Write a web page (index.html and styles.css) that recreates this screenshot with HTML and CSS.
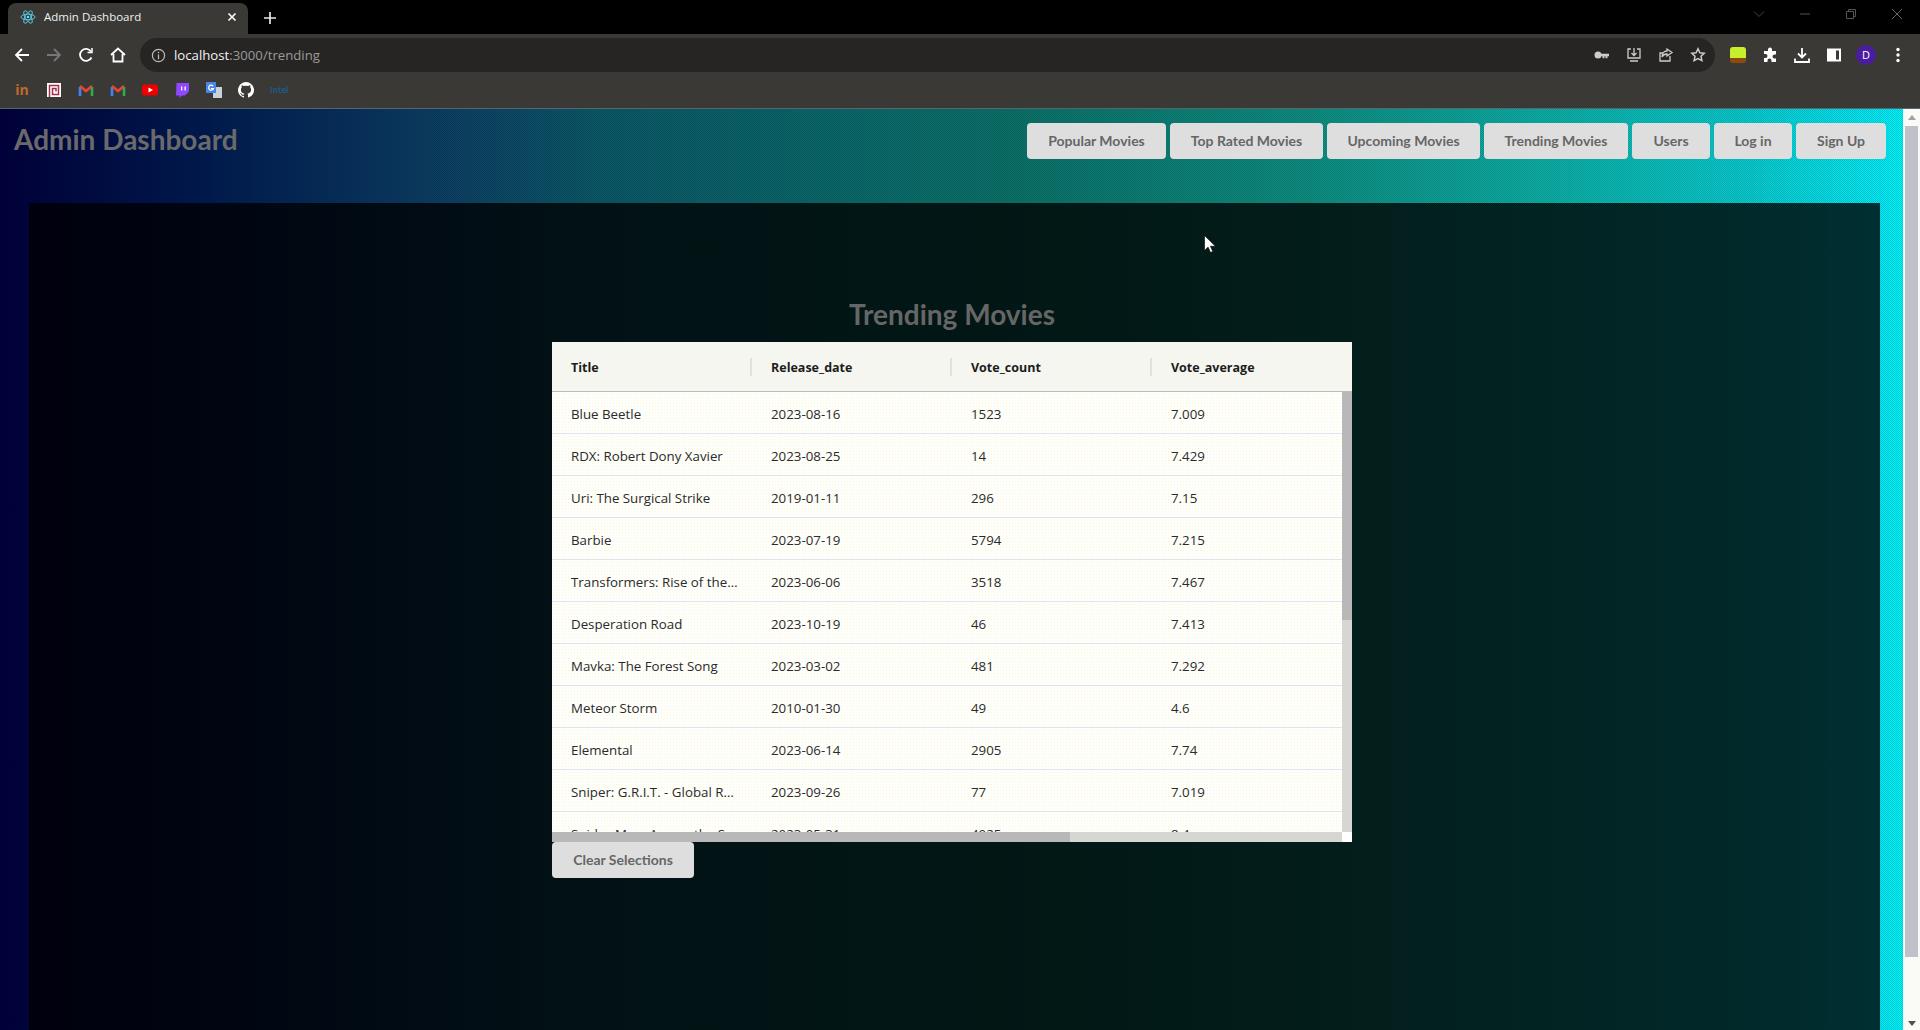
FILE: index.html
```html
<!DOCTYPE html>
<html lang="en">
<head>
  <meta charset="UTF-8" />
  <meta name="viewport" content="width=device-width, initial-scale=1.0" />
  <title>Admin Dashboard</title>
  <link rel="stylesheet" href="styles.css">
</head>
<body>
  <!-- browser chrome -->
  <div class="tabstrip">
    <div class="tab">
      <svg class="favicon" viewBox="0 0 16 16" fill="none" stroke="#61dafb" stroke-width=".8">
        <circle cx="8" cy="8" r="1.3" fill="#61dafb" stroke="none"/>
        <ellipse cx="8" cy="8" rx="7" ry="2.8"/>
        <ellipse cx="8" cy="8" rx="7" ry="2.8" transform="rotate(60 8 8)"/>
        <ellipse cx="8" cy="8" rx="7" ry="2.8" transform="rotate(120 8 8)"/>
      </svg>
      <span class="tab-title">Admin Dashboard</span>
      <svg class="tab-close" viewBox="0 0 10 10" stroke="#fff" stroke-width="1.6"><path d="M1.5 1.5l7 7M8.5 1.5l-7 7"/></svg>
    </div>
    <svg class="new-tab" viewBox="0 0 12 12" stroke="#e8e8e8" stroke-width="1.7"><path d="M6 0v12M0 6h12"/></svg>
    <div class="window-controls">
      <svg viewBox="0 0 12 12" fill="none" stroke="#444" stroke-width="1"><path d="M1 3.5l5 5 5-5"/></svg>
      <svg viewBox="0 0 12 12" fill="none" stroke="#555" stroke-width="1"><path d="M1 6h10"/></svg>
      <svg viewBox="0 0 12 12" fill="none" stroke="#555" stroke-width="1"><path d="M1.5 3.5h7v7h-7zM3.5 3.5v-2h7v7h-2"/></svg>
      <svg viewBox="0 0 12 12" fill="none" stroke="#666" stroke-width="1"><path d="M1 1l10 10M11 1L1 11"/></svg>
    </div>
  </div>

  <div class="toolbar">
    <div class="nav-icons">
      <svg viewBox="0 0 16 16" fill="none" stroke="#fff" stroke-width="1.8"><path d="M15 8H2M8 2L2 8l6 6"/></svg>
      <svg viewBox="0 0 16 16" fill="none" stroke="#777" stroke-width="1.8"><path d="M1 8h13M8 2l6 6-6 6"/></svg>
      <svg viewBox="0 0 16 16" fill="none" stroke="#fff" stroke-width="1.8"><path d="M13.5 10.5A6 6 0 1 1 13 4.5"/><path d="M14 1v4.5H9.5" stroke-width="1.5"/></svg>
      <svg viewBox="0 0 16 16" fill="none" stroke="#fff" stroke-width="1.8"><path d="M1 8l7-6.5L15 8M3.5 7v7.5h9V7"/></svg>
    </div>
    <div class="urlbar">
      <svg class="url-info" viewBox="0 0 16 16" fill="none" stroke="#bbb" stroke-width="1.3"><circle cx="8" cy="8" r="6.5"/><path d="M8 7v5M8 4v1.6"/></svg>
      <span class="url-text"><span class="url-host">localhost</span>:3000/trending</span>
      <div class="url-actions">
        <svg viewBox="0 0 16 16" fill="#ccc"><circle cx="4" cy="8" r="3.5"/><path d="M6 6.800h9v2.400h-1.500v2h-2v-2h-1v2h-2v-2H6z"/></svg>
        <svg viewBox="0 0 16 16" fill="none" stroke="#ccc" stroke-width="1.3"><path d="M5 2H2v9h12V2h-3M8 1v7M5.500 6L8 8.500 10.500 6M4 14h8"/></svg>
        <svg viewBox="0 0 16 16" fill="none" stroke="#ccc" stroke-width="1.3"><path d="M12 9v5H2V6h3M9 2l5 3.500L9 9V7C6.500 7 5 8 4 10c0-3.500 2-6 5-6z"/></svg>
        <svg viewBox="0 0 16 16" fill="none" stroke="#ccc" stroke-width="1.5"><path d="M8 1.800l1.900 4 4.300.5-3.200 3 .9 4.300L8 11.500l-3.900 2.100.9-4.300-3.200-3 4.300-.5z"/></svg>
      </div>
    </div>
    <div class="ext-icons">
      <span class="ext-note"></span>
      <svg viewBox="0 0 16 16" fill="#fff"><path d="M6 2.500a2 2 0 0 1 4 0V4h4v3.500h-1.500a2 2 0 0 0 0 4H14V15H9.500v-1.500a2 2 0 0 0-4 0V15H2v-4h1.500a2 2 0 0 0 0-4H2V4h4z"/></svg>
      <svg viewBox="0 0 16 16" fill="none" stroke="#fff" stroke-width="1.8"><path d="M8 1v9M4 6.500l4 4 4-4M1 11.500V15h14v-3.500"/></svg>
      <svg viewBox="0 0 16 16"><path fill="#fff" d="M1 1.500h14v13H1z"/><path fill="#3a3936" d="M10 3.500h3v9h-3z"/></svg>
      <span class="avatar">D</span>
      <svg viewBox="0 0 16 16" fill="#fff"><circle cx="8" cy="2.500" r="1.700"/><circle cx="8" cy="8" r="1.700"/><circle cx="8" cy="13.500" r="1.700"/></svg>
    </div>
  </div>

  <div class="bookmarks">
    <span class="bm-invision">in</span>
    <svg viewBox="0 0 16 16"><path fill="#fff" d="M1 1h14v14H1z"/><path fill="none" stroke="#a0304a" stroke-width="1.500" d="M3.500 15V3.500h9v9H6.500v-6h3.500v3"/></svg>
    <svg viewBox="0 0 16 16" fill="none" stroke-width="2.600"><path stroke="#4285f4" d="M2 14V5"/><path stroke="#ea4335" d="M2 4l6 5 6-5"/><path stroke="#34a853" d="M14 5v9"/></svg>
    <svg viewBox="0 0 16 16" fill="none" stroke-width="2.600"><path stroke="#4285f4" d="M2 14V5"/><path stroke="#ea4335" d="M2 4l6 5 6-5"/><path stroke="#34a853" d="M14 5v9"/></svg>
    <svg viewBox="0 0 16 16"><rect y="2.500" width="16" height="11" rx="2.500" fill="#e00"/><path fill="#fff" d="M6.500 5.500L11 8l-4.500 2.500z"/></svg>
    <svg viewBox="0 0 16 16"><path fill="#9146ff" d="M2.500 1H15v8.500L11 13.500H8L5.500 16v-2.500H2z"/><path fill="#fff" d="M7 4.500h1.300v4H7zM10.500 4.500h1.300v4h-1.300z"/></svg>
    <svg viewBox="0 0 16 16"><path fill="#c8d4dc" d="M7 5h9v11H7z"/><path fill="#4a86e8" d="M0 0h10v11H0z"/><path fill="none" stroke="#fff" stroke-width="1.200" d="M7 4a2.500 2.500 0 1 0 .5 2.500H5"/></svg>
    <svg viewBox="0 0 16 16"><path fill="#fff" fill-rule="evenodd" d="M8 0a8 8 0 0 0-2.500 15.600c.4 0 .5-.2.500-.4v-1.400c-2.200.5-2.700-1-2.700-1-.4-.9-.9-1.200-.9-1.200-.7-.5.100-.5.100-.5.800 0 1.200.8 1.200.8.700 1.200 1.900.9 2.300.7 0-.5.300-.9.500-1.100-1.800-.2-3.600-.9-3.600-4 0-.9.300-1.600.8-2.100 0-.2-.3-1 .1-2.100 0 0 .7-.2 2.200.8a7.500 7.500 0 0 1 4 0c1.500-1 2.200-.8 2.200-.8.400 1.100.2 1.900.1 2.100.5.500.8 1.200.8 2.100 0 3.100-1.900 3.800-3.700 4 .3.300.6.700.6 1.500v2.200c0 .2.100.5.500.4A8 8 0 0 0 8 0z"/></svg>
    <span class="bm-intel">Intel</span>
  </div>

  <!-- page -->
  <div class="viewport">
    <div class="page">
      <header class="topbar">
        <h1 class="brand">Admin Dashboard</h1>
        <nav class="nav">
          <button class="btn btn-popular">Popular Movies</button>
          <button class="btn btn-top">Top Rated Movies</button>
          <button class="btn btn-upcoming">Upcoming Movies</button>
          <button class="btn btn-trending">Trending Movies</button>
          <button class="btn btn-users">Users</button>
          <button class="btn btn-login">Log in</button>
          <button class="btn btn-signup">Sign Up</button>
        </nav>
      </header>

      <main class="panel">
        <section class="content">
          <h2 class="heading">Trending Movies</h2>
          <div class="grid">
            <div class="grid-head">
              <div class="col">Title</div>
              <div class="col">Release_date</div>
              <div class="col">Vote_count</div>
              <div class="col">Vote_average</div>
            </div>
            <div class="grid-body">
              <div class="row"><div class="cell">Blue Beetle</div><div class="cell">2023-08-16</div><div class="cell">1523</div><div class="cell">7.009</div></div>
              <div class="row"><div class="cell">RDX: Robert Dony Xavier</div><div class="cell">2023-08-25</div><div class="cell">14</div><div class="cell">7.429</div></div>
              <div class="row"><div class="cell">Uri: The Surgical Strike</div><div class="cell">2019-01-11</div><div class="cell">296</div><div class="cell">7.15</div></div>
              <div class="row"><div class="cell">Barbie</div><div class="cell">2023-07-19</div><div class="cell">5794</div><div class="cell">7.215</div></div>
              <div class="row"><div class="cell">Transformers: Rise of the Beasts</div><div class="cell">2023-06-06</div><div class="cell">3518</div><div class="cell">7.467</div></div>
              <div class="row"><div class="cell">Desperation Road</div><div class="cell">2023-10-19</div><div class="cell">46</div><div class="cell">7.413</div></div>
              <div class="row"><div class="cell">Mavka: The Forest Song</div><div class="cell">2023-03-02</div><div class="cell">481</div><div class="cell">7.292</div></div>
              <div class="row"><div class="cell">Meteor Storm</div><div class="cell">2010-01-30</div><div class="cell">49</div><div class="cell">4.6</div></div>
              <div class="row"><div class="cell">Elemental</div><div class="cell">2023-06-14</div><div class="cell">2905</div><div class="cell">7.74</div></div>
              <div class="row"><div class="cell">Sniper: G.R.I.T. - Global Response</div><div class="cell">2023-09-26</div><div class="cell">77</div><div class="cell">7.019</div></div>
              <div class="row"><div class="cell">Spider-Man: Across the Spider-Verse</div><div class="cell">2023-05-31</div><div class="cell">4925</div><div class="cell">8.4</div></div>
            </div>
            <div class="scroll-y"><div class="thumb-y"></div></div>
            <div class="scroll-x"><div class="thumb-x"></div></div>
            <div class="scroll-corner"></div>
          </div>
          <button class="btn btn-clear">Clear Selections</button>
        </section>
      </main>
    </div>

    <div class="page-scroll">
      <span class="arrow-up"></span>
      <div class="page-thumb"></div>
      <span class="arrow-down"></span>
    </div>

    <svg class="cursor" viewBox="0 0 12 18"><path fill="#fff" stroke="#000" stroke-width=".6" d="M.5.500v15l3.600-3.400 2.400 5.400 2.300-1-2.400-5.300h5z"/></svg>
  </div>
</body>
</html>
```

FILE: styles.css
```css
* {
  box-sizing: border-box;
}
html, body {
  margin: 0;
  height: 100%;
  overflow: hidden;
}
body {
  display: flex;
  flex-direction: column;
  background: #000;
  font-family: "Open Sans", "Noto Sans", sans-serif;
}

/* browser chrome */
.tabstrip {
  height: 34px;
  flex: none;
  display: flex;
  align-items: flex-end;
  padding-left: 8px;
  background: #000;
}
.tab {
  width: 240px;
  height: 31px;
  display: flex;
  align-items: center;
  padding: 0 11px 4px 12px;
  background: #3a3936;
  border-radius: 8px 8px 0 0;
}
.favicon {
  width: 16px;
  height: 16px;
}
.tab-title {
  flex: 1;
  margin-left: 8px;
  font-size: 11.5px;
  color: #f0f0f0;
}
.tab-close {
  width: 10px;
  height: 10px;
}
.new-tab {
  width: 12px;
  height: 12px;
  margin: 0 0 10px 16px;
}
.window-controls {
  margin-left: auto;
  padding: 0 17px 14px 0;
  display: flex;
  gap: 34px;
}
.window-controls svg {
  width: 12px;
  height: 12px;
}
.toolbar {
  height: 42px;
  flex: none;
  display: flex;
  align-items: center;
  padding-left: 14px;
  background: #3a3936;
}
.nav-icons {
  width: 126px;
  display: flex;
  gap: 16px;
}
.nav-icons svg {
  width: 16px;
  height: 16px;
}
.urlbar {
  width: 1575px;
  height: 34px;
  display: flex;
  align-items: center;
  padding: 0 9px 0 11px;
  border-radius: 17px;
  background: #262524;
}
.url-info {
  width: 15px;
  height: 15px;
}
.url-text {
  margin-left: 8px;
  font-size: 13.2px;
  color: #9a9a9a;
}
.url-host {
  color: #f2f2f2;
}
.url-actions {
  margin-left: auto;
  display: flex;
  gap: 16px;
}
.url-actions svg {
  width: 16px;
  height: 16px;
}
.ext-icons {
  display: flex;
  align-items: center;
  gap: 16px;
  margin-left: 15px;
}
.ext-icons svg {
  width: 16px;
  height: 16px;
}
.ext-note {
  width: 16px;
  height: 16px;
  border-radius: 3px;
  background: linear-gradient(#c6f02c 68%, #8a4a10 68%);
}
.avatar {
  width: 20px;
  height: 20px;
  margin: 0 -2px;
  border-radius: 50%;
  background: #4a1da0;
  color: #fff;
  font-size: 11px;
  line-height: 20px;
  text-align: center;
}
.bookmarks {
  height: 33px;
  flex: none;
  display: flex;
  align-items: center;
  gap: 16px;
  padding: 0 0 5px 14px;
  background: #3a3936;
  border-bottom: 1px solid #5a6470;
}
.bookmarks svg {
  width: 16px;
  height: 16px;
}
.bm-invision {
  width: 16px;
  font-size: 14px;
  font-weight: 700;
  line-height: 16px;
  color: #c06a28;
  text-align: center;
}
.bm-intel {
  width: 16px;
  font-size: 8px;
  font-weight: 700;
  color: #1c5a88;
}

/* page */
.viewport {
  flex: 1;
  position: relative;
  display: flex;
  min-height: 0;
}
.page {
  flex: 1;
  min-width: 0;
  display: flex;
  flex-direction: column;
  background:
    repeating-conic-gradient(rgba(0, 0, 0, 0.14) 0 25%, transparent 0 50%) 0 0 / 2px 2px,
    linear-gradient(90deg, #00003c 0, #001a50 200px, #0c4064 450px, #0a5868 600px, #0a6c6a 900px, #0a7068 1000px, #0e8c80 1300px, #0cb0a8 1560px, #08c8cc 1740px, #00e8f4 1880px, #00f0f8 100%);
}
.topbar {
  height: 94px;
  flex: none;
  display: flex;
  justify-content: space-between;
  padding: 14px 17px 0 14px;
}
.brand {
  margin: -2px 0 0;
  font-family: Lato, sans-serif;
  font-size: 28px;
  font-weight: 700;
  line-height: 36px;
  color: #6a6a6a;
}
.nav {
  display: flex;
  height: 36px;
  gap: 4px;
}
.btn {
  height: 36px;
  padding: 0 0 2px;
  border: 0;
  border-radius: 4px;
  background: #dedede;
  font-family: Lato, sans-serif;
  font-size: 14px;
  font-weight: 700;
  color: #666;
}
.btn-popular { width: 139px; }
.btn-top { width: 153px; }
.btn-upcoming { width: 153px; }
.btn-trending { width: 144px; }
.btn-users { width: 78px; }
.btn-login { width: 78px; }
.btn-signup { width: 90px; }
.panel {
  flex: 1;
  margin: 0 23px 0 29px;
  padding-left: 523px;
  background: rgba(0, 0, 0, 0.78);
}
.content {
  width: 800px;
}
.heading {
  height: 139px;
  margin: 0;
  padding-top: 91px;
  font-family: Lato, sans-serif;
  font-size: 28px;
  font-weight: 700;
  line-height: 40px;
  text-align: center;
  color: #666;
}
.grid {
  position: relative;
  width: 800px;
  height: 500px;
  display: flex;
  flex-direction: column;
  background:
    radial-gradient(#fafad0 0.6px, transparent 0.8px) 0 0 / 3px 3px,
    #fefefd;
  font-size: 13.3px;
  color: #2a2a2a;
}
.grid-head {
  height: 50px;
  flex: none;
  display: flex;
  align-items: center;
  background: #f6f6f0;
  border-bottom: 1px solid #bdbdb8;
  font-size: 12.5px;
  font-weight: 700;
  color: #1c1c1c;
}
.col {
  width: 200px;
  height: 18px;
  padding-left: 19px;
  line-height: 20px;
  border-right: 2px solid #e2e2dc;
}
.col:last-child {
  border-right: 0;
}
.grid-body {
  flex: 1;
  min-height: 0;
  overflow: hidden;
}
.row {
  height: 42px;
  display: flex;
  align-items: center;
  padding-top: 2px;
  border-bottom: 1px solid #e2e2ea;
}
.cell {
  width: 200px;
  padding: 0 13px 0 19px;
  white-space: nowrap;
  overflow: hidden;
  text-overflow: ellipsis;
}

/* the grid's scrollbars lie over the rows */
.scroll-y {
  position: absolute;
  right: 0;
  top: 50px;
  bottom: 10px;
  width: 10px;
  background: #d6d6d2;
}
.thumb-y {
  height: 228px;
  background: #b8b8b8;
}
.scroll-x {
  position: absolute;
  left: 0;
  right: 10px;
  bottom: 0;
  height: 10px;
  background: #d6d6d2;
}
.thumb-x {
  width: 518px;
  height: 10px;
  background: #b8b8b8;
}
.scroll-corner {
  position: absolute;
  right: 0;
  bottom: 0;
  width: 10px;
  height: 10px;
  background: #fff;
}
.btn-clear {
  display: block;
  width: 142px;
}

/* page scrollbar */
.page-scroll {
  width: 17px;
  flex: none;
  display: flex;
  flex-direction: column;
  align-items: center;
  background: #fafaf6;
}
.arrow-up {
  margin-top: 6px;
  border: 4px solid transparent;
  border-top: 0;
  border-bottom: 5px solid #a0a0a0;
}
.page-thumb {
  width: 13px;
  height: 831px;
  margin-top: 6px;
  background: #c0c0c8;
}
.arrow-down {
  margin-top: auto;
  margin-bottom: 4px;
  border: 4px solid transparent;
  border-bottom: 0;
  border-top: 5px solid #505050;
}
.cursor {
  position: absolute;
  left: 1204px;
  top: 126px;
  width: 12px;
  height: 18px;
}
```
